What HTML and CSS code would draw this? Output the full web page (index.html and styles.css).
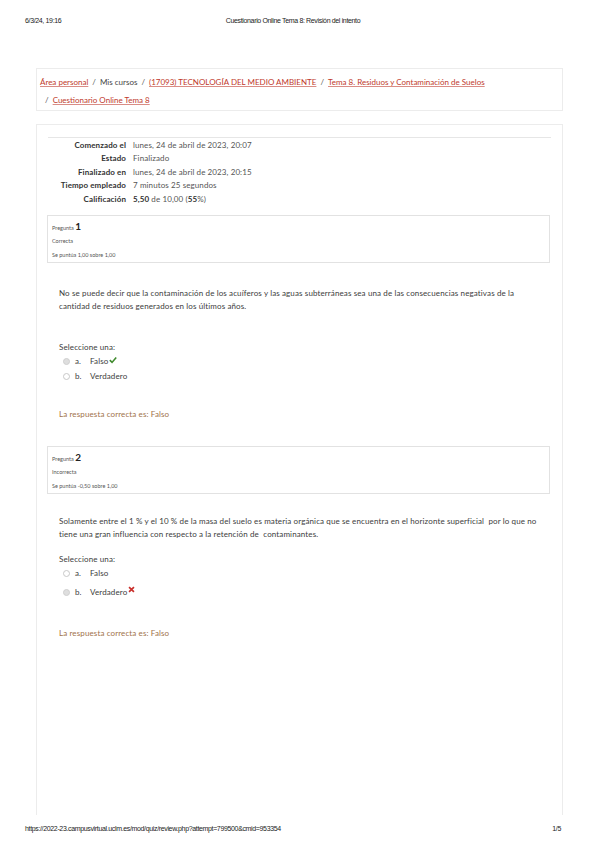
FILE: index.html
```html
<!DOCTYPE html>
<html lang="es">
<head>
<meta charset="utf-8">
<title>Cuestionario Online Tema 8: Revisión del intento</title>
<link rel="stylesheet" href="styles.css">
</head>
<body>
<header class="print-head">
  <span class="ph-left">6/3/24, 19:16</span>
  <span class="ph-center">Cuestionario Online Tema 8: Revisión del intento</span>
  <span></span>
</header>

<div class="page">
  <nav class="crumbs">
    <a href="#">Área personal</a><span class="sep">/</span><span class="plain">Mis cursos</span><span class="sep">/</span><a href="#">(17093) TECNOLOGÍA DEL MEDIO AMBIENTE</a><span class="sep">/</span><a href="#">Tema 8. Residuos y Contaminación de Suelos</a><br>
    <span class="sep first">/</span><a href="#">Cuestionario Online Tema 8</a>
  </nav>

  <main class="main">
    <table class="summary">
      <tr><th>Comenzado el</th><td>lunes, 24 de abril de 2023, 20:07</td></tr>
      <tr><th>Estado</th><td>Finalizado</td></tr>
      <tr><th>Finalizado en</th><td>lunes, 24 de abril de 2023, 20:15</td></tr>
      <tr><th>Tiempo empleado</th><td>7 minutos 25 segundos</td></tr>
      <tr><th>Calificación</th><td><b>5,50</b> de 10,00 (<b>55</b>%)</td></tr>
    </table>

    <section class="q">
      <div class="info">
        <div class="qno">Pregunta <span class="num">1</span></div>
        <div class="state">Correcta</div>
        <div class="grade">Se puntúa 1,00 sobre 1,00</div>
      </div>
      <div class="content">
        <p class="qtext">No se puede decir que la contaminación de los acuíferos y las aguas subterráneas sea una de las consecuencias negativas de la cantidad de residuos generados en los últimos años.</p>
        <div class="prompt">Seleccione una:</div>
        <div class="opt"><span class="radio on"></span><span class="let">a.</span><span>Falso</span><svg class="mark" viewBox="0 0 10 10" width="8" height="8"><path d="M1 5.2 L3.8 8 L9 1.8" fill="none" stroke="#3f8a2d" stroke-width="2"/></svg></div>
        <div class="opt"><span class="radio"></span><span class="let">b.</span><span>Verdadero</span></div>
        <div class="right">La respuesta correcta es: Falso</div>
      </div>
    </section>

    <section class="q q2">
      <div class="info">
        <div class="qno">Pregunta <span class="num">2</span></div>
        <div class="state">Incorrecta</div>
        <div class="grade">Se puntúa -0,50 sobre 1,00</div>
      </div>
      <div class="content">
        <p class="qtext">Solamente entre el 1 % y el 10 % de la masa del suelo es materia orgánica que se encuentra en el horizonte superficial&nbsp; por lo que no tiene una gran influencia con respecto a la retención de&nbsp; contaminantes.</p>
        <div class="prompt">Seleccione una:</div>
        <div class="opt"><span class="radio"></span><span class="let">a.</span><span>Falso</span></div>
        <div class="opt opt-b"><span class="radio on"></span><span class="let">b.</span><span>Verdadero</span><svg class="mark x" viewBox="0 0 10 10" width="7" height="7"><path d="M1.5 1.5 L8.5 8.5 M8.5 1.5 L1.5 8.5" fill="none" stroke="#c9302c" stroke-width="2.4"/></svg></div>
        <div class="right">La respuesta correcta es: Falso</div>
      </div>
    </section>
  </main>
</div>

<footer class="print-foot">
  <span>https://2022-23.campusvirtual.uclm.es/mod/quiz/review.php?attempt=799500&amp;cmid=953354</span>
  <span>1/5</span>
</footer>
</body>
</html>
```

FILE: styles.css
```css
* { box-sizing: border-box; }
html, body { margin: 0; padding: 0; background: #fff; }
body {
  width: 599px;
  height: 848px;
  font-family: Lato, "Open Sans", sans-serif;
  color: #3a3a3a;
  overflow: hidden;
}

.print-head, .print-foot {
  font-family: "Liberation Sans", Arial, sans-serif;
  font-size: 7px;
  letter-spacing: -0.35px;
  color: #222;
  display: grid;
  padding: 0 38px 0 25px;
}
.print-head {
  grid-template-columns: 1fr auto 1fr;
  height: 40px;
  padding-top: 17px;
  line-height: 8px;
}
.ph-center { text-align: center; }

.page {
  margin: 28px 0 0 36px;
  width: 527px;
}

.crumbs {
  border: 1px solid #ececec;
  height: 43px;
  padding: 4px 3px 0 3px;
  font-size: 8px;
  line-height: 18px;
  color: #444;
}
.crumbs a {
  color: #c0392b;
  text-decoration: underline;
  text-decoration-color: #d98d86;
}
.crumbs .sep { margin: 0 4px; color: #555; }
.crumbs .sep.first { margin-left: 5px; }

.main {
  margin-top: 13px;
  border: 1px solid #ececec;
  border-bottom: none;
  height: 691px;
  padding: 12px 12px 0 11px;
}

.summary {
  width: 503px;
  border-collapse: collapse;
  font-size: 8px;
  letter-spacing: 0.1px;
  border-top: 1px solid #e6e6e6;
}
.summary th, .summary td {
  height: 13.7px;
  padding: 0;
  line-height: 12px;
  vertical-align: middle;
}
.summary th {
  width: 85px;
  text-align: right;
  padding-right: 7px;
  font-weight: bold;
  color: #333;
}
.summary td { color: #555; }
.summary td b { color: #333; }

.q { margin-top: 9px; }
.info {
  border: 1px solid #e2e2e2;
  width: 503px;
  height: 48px;
  margin-left: -1px;
  padding: 4px 4px 0 4px;
  color: #555;
}
.qno { font-size: 5.5px; line-height: 12px; }
.qno .num { font-size: 10px; font-weight: bold; color: #222; }
.state { font-size: 5.5px; line-height: 10px; margin-top: 2px; }
.grade { font-size: 5.5px; line-height: 10px; margin-top: 4px; }

.content { padding: 24px 0 0 11px; font-size: 8px; letter-spacing: 0.12px; color: #3c3c3c; }
.qtext { margin: 0; line-height: 13px; width: 485px; }
.prompt { margin-top: 27px; line-height: 14px; }
.opt {
  display: flex;
  align-items: center;
  height: 15px;
  padding-left: 4px;
}
.radio {
  width: 7px;
  height: 7px;
  border: 1px solid #c8c8c8;
  border-radius: 50%;
  margin-right: 5px;
  background: #fff;
}
.radio.on { background: #dedede; border-color: #cfcfcf; }
.let { width: 15px; }
.mark { margin-left: 1px; margin-bottom: 2px; }
.mark.x { margin-bottom: 6px; }
.right { margin-top: 23px; color: #a0724a; line-height: 14px; }

.q2 { margin-top: 25px; }
.q2 .content { padding-top: 21px; }
.q2 .prompt { margin-top: 11px; }
.q2 .opt-b { height: 23px; }
.q2 .right { margin-top: 22px; }

.print-foot {
  grid-template-columns: 1fr auto;
  margin-top: 10px;
  line-height: 8px;
}
```
